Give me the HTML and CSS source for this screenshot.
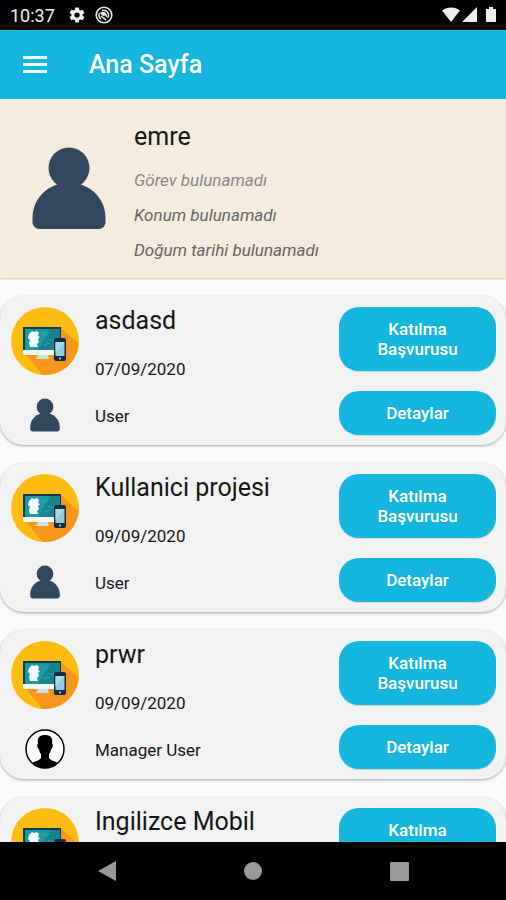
FILE: index.html
```html
<!DOCTYPE html>
<html lang="tr">
<head>
<meta charset="utf-8">
<meta name="viewport" content="width=device-width, initial-scale=1">
<title>Ana Sayfa</title>
<link rel="stylesheet" href="styles.css">
</head>
<body>
<svg class="defs" aria-hidden="true">
  <symbol id="person" viewBox="0 0 74 82">
    <circle cx="37" cy="21" r="20.500"/>
    <path d="M27 37C12 41 .5 54 .5 71v4c0 4 3 7 7 7h59c4 0 7-3 7-7v-4c0-17-11.500-30-26.500-34z"/>
  </symbol>
  <symbol id="project" viewBox="0 0 68 68">
    <circle cx="34" cy="34" r="34" fill="#fdbc12"/>
    <path d="M13 45 31 67.800A34 34 0 0 0 67.800 37L50 21 48 44z" fill="#f9961e"/>
    <path d="M12 20h38v25H12z" fill="#173848"/>
    <path d="M14 22h35v21H14z" fill="#1b9aa6"/>
    <path d="M39 22h10v21H27z" fill="#148590"/>
    <path d="M31 26l4 2 4-3M37 32l4 2 4-3M33 38l6-2" fill="none" stroke="#2fa9ae"/>
    <path d="M21 24l2 1 3-1 2 2-1 3 2 1-2 2 1 3-2 2 1 3h-8l-1-4 1-3-2-2 1-4z" fill="#f5fbfb"/>
    <path d="M12 43h38v3a2 2 0 0 1-2 2H14a2 2 0 0 1-2-2z" fill="#f4f5f5"/>
    <path d="M27 48h10l1 4H25z" fill="#c2e4ec"/>
    <rect x="43" y="31" width="12" height="23" rx="2" fill="#142e40"/>
    <path d="M44.500 35h9v14h-9z" fill="#94cbdc"/>
    <path d="M44.500 35h9l-9 11z" fill="#abd9e6"/>
    <circle cx="49" cy="51.500" r="1" fill="#cde"/>
  </symbol>
  <symbol id="manager" viewBox="0 0 40 40">
    <circle cx="20" cy="20" r="19" fill="#fff" stroke="#000" stroke-width="1.500"/>
    <path d="M20 6c-6 0-8 3-7 9-1 0-1 1-.5 3s1 2 1.500 2c.5 3 1 4 2 5v4c-2 3-6 3-9 5a19 19 0 0 0 26 0c-3-2-7-2-9-5v-4c1-1 1.500-2 2-5 .5 0 1 0 1.500-2s.5-3-.5-3c1-6-1-9-7-9z"/>
  </symbol>
</svg>
<div class="screen">
  <div class="status">
    <span>10:37</span>
    <svg class="status-icon" width="18" height="18" viewBox="0 0 24 24"><path fill="#eee" fill-rule="evenodd" d="M19.400 13a7 7 0 0 0 0-2l2.600-1.800-2.500-4.200-3 1.100a7 7 0 0 0-1.500-.9L14.500 2h-5L9 5.200a7 7 0 0 0-1.500.9L4.500 5 2 9.200 4.600 11a7 7 0 0 0 0 2L2 14.800 4.500 19l3-1.100a7 7 0 0 0 1.500.9l.5 3.200h5l.5-3.200a7 7 0 0 0 1.500-.9l3 1.100 2.500-4.200zM12 15.500a3.500 3.500 0 1 1 0-7 3.500 3.500 0 0 1 0 7z"/></svg>
    <svg class="status-icon" width="18" height="18" viewBox="0 0 18 18" fill="none" stroke="#eee"><circle cx="9" cy="9" r="7.800" stroke-width="1.600"/><path d="M6 13A5 5 0 0 1 4.500 7M7 4.500A5 5 0 0 1 13 11.500" stroke-width="1.400"/><path d="M5 7C7 5 10 5.500 11.500 8L13 12 10 9.500 8 10z" fill="#eee" stroke="none"/><path d="M6 10l5 4" stroke-width="1.500"/></svg>
    <svg class="signals" width="56" height="18" viewBox="0 0 56 18" fill="#eee"><path d="M0 4.500C5 .5 13 .5 18 4.500L9 16zM20 16 35 1v15zM44 3h3V1h4v2h3v13H44z"/></svg>
  </div>
  <header class="bar">
    <button class="menu" aria-label="Menü"><svg width="24" height="18" viewBox="0 0 24 18"><path d="M0 0h24v3H0zM0 7h24v3H0zM0 14h24v3H0z" fill="#e6faff"/></svg></button>
    <h1>Ana Sayfa</h1>
  </header>
  <main>
    <section class="profile">
      <svg class="avatar"><use href="#person"/></svg>
      <div class="about">
        <h2>emre</h2>
        <p class="light">Görev bulunamadı</p>
        <p>Konum bulunamadı</p>
        <p>Doğum tarihi bulunamadı</p>
      </div>
    </section>
    <article class="card">
      <div class="pics"><svg class="disc"><use href="#project"/></svg><svg class="user"><use href="#person"/></svg></div>
      <div class="info"><h2>asdasd</h2><p>07/09/2020</p><p class="owner">User</p></div>
      <div class="actions"><button class="join">Katılma Başvurusu</button><button>Detaylar</button></div>
    </article>
    <article class="card">
      <div class="pics"><svg class="disc"><use href="#project"/></svg><svg class="user"><use href="#person"/></svg></div>
      <div class="info"><h2>Kullanici projesi</h2><p>09/09/2020</p><p class="owner">User</p></div>
      <div class="actions"><button class="join">Katılma Başvurusu</button><button>Detaylar</button></div>
    </article>
    <article class="card">
      <div class="pics"><svg class="disc"><use href="#project"/></svg><svg class="manager"><use href="#manager"/></svg></div>
      <div class="info"><h2>prwr</h2><p>09/09/2020</p><p class="owner">Manager User</p></div>
      <div class="actions"><button class="join">Katılma Başvurusu</button><button>Detaylar</button></div>
    </article>
    <article class="card">
      <div class="pics"><svg class="disc"><use href="#project"/></svg></div>
      <div class="info"><h2>Ingilizce Mobil</h2></div>
      <div class="actions"><button class="join">Katılma Başvurusu</button></div>
    </article>
  </main>
  <nav class="nav">
    <button aria-label="Geri"><svg width="22" height="22" viewBox="0 0 22 22"><path d="M20 1v20L2 11z"/></svg></button>
    <button aria-label="Ana ekran"><svg width="22" height="22" viewBox="0 0 22 22"><circle cx="11" cy="11" r="9"/></svg></button>
    <button aria-label="Son uygulamalar"><svg width="22" height="22" viewBox="0 0 22 22"><rect x="2" y="2" width="19" height="19" rx="1"/></svg></button>
  </nav>
</div>
</body>
</html>
```
FILE: styles.css
```css
* { box-sizing: border-box; }
body { margin: 0; font-family: Roboto, "Liberation Sans", sans-serif; color: #161616; background: #fafafa; }
h1, h2, p { margin: 0; }
svg { display: block; flex: none; }
button { border: 0; padding: 0; font: inherit; cursor: pointer; }
.defs { position: absolute; width: 0; height: 0; }
.screen { height: 100vh; display: flex; flex-direction: column; overflow: hidden; }

.status { height: 30px; flex: none; display: flex; align-items: center; padding: 0 8px 0 10px; background: #000; color: #eee; font-size: 18px; }
.status-icon { margin-left: 13px; }
.status-icon + .status-icon { margin-left: 9px; }
.signals { margin-left: auto; }

.bar { height: 69px; flex: none; display: flex; align-items: center; padding: 0 23px; background: #16b7df; color: #fff; }
.menu { background: none; margin-right: 42px; }
.bar h1 { font-size: 25px; line-height: 32px; font-weight: 500; }

main { flex: 1; min-height: 0; overflow: hidden; display: flex; flex-direction: column; gap: 18px; }
.profile { flex: none; display: flex; align-items: flex-start; padding: 20px 32px 10px; background: #f4ecdc; box-shadow: 0 1px 2px #0003; }
.avatar { width: 74px; height: 82px; fill: #32485f; margin: 28px 28px 0 0; }
.about h2 { font-size: 25px; line-height: 36px; font-weight: 400; margin-bottom: 8px; }
.about p { font-size: 17px; line-height: 35px; font-style: italic; color: #666; }
.about .light { color: #888; }

.card { flex: none; height: 149px; display: flex; padding: 11px 10px 11px 11px; background: #f2f2f2; border-radius: 24px; box-shadow: 0 1px 3px #0005; }
.pics { width: 68px; display: flex; flex-direction: column; align-items: center; margin-right: 16px; }
.disc { width: 68px; height: 68px; }
.user { width: 30px; height: 34px; margin-top: 23px; fill: #32485f; }
.manager { width: 40px; height: 40px; margin-top: 20px; }
.info { flex: 1; min-width: 0; }
.info h2 { font-size: 25px; line-height: 28px; font-weight: 400; margin-bottom: 22px; }
.info p { font-size: 17px; line-height: 24px; }
.info .owner { margin-top: 23px; }
.actions { width: 157px; display: flex; flex-direction: column; gap: 20px; }
.actions button { height: 44px; flex: none; border-radius: 20px; background: #16b7df; color: #fff; font-size: 17px; line-height: 20px; font-weight: 500; box-shadow: 0 1px 1px #0002; }
.actions .join { height: 64px; padding: 0 32px; }

.nav { height: 58px; flex: none; display: flex; justify-content: center; gap: 124px; background: #000; }
.nav button { background: none; }
.nav svg { fill: #999; }
```
